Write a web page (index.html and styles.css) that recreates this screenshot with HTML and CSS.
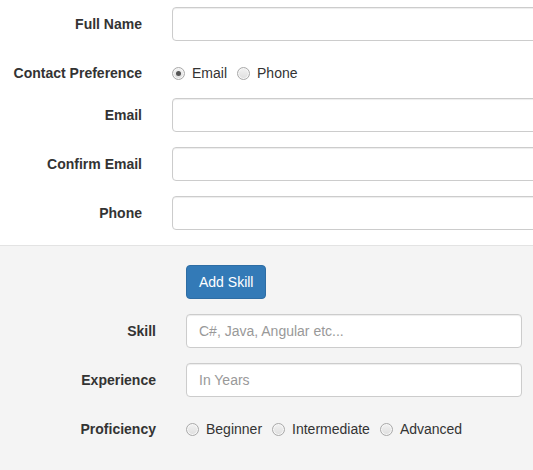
FILE: index.html
```html
<!DOCTYPE html>
<html>
<head>
<meta charset="utf-8">
<link rel="stylesheet" href="styles.css">
</head>
<body>
<form class="form">
  <section class="main">
    <div class="row">
      <label class="lbl">Full Name</label>
      <input class="ctl" type="text">
    </div>
    <div class="row">
      <label class="lbl">Contact Preference</label>
      <div class="radios">
        <label class="radio"><input type="radio" name="cp" checked>Email</label>
        <label class="radio"><input type="radio" name="cp">Phone</label>
      </div>
    </div>
    <div class="row">
      <label class="lbl">Email</label>
      <input class="ctl" type="text">
    </div>
    <div class="row">
      <label class="lbl">Confirm Email</label>
      <input class="ctl" type="text">
    </div>
    <div class="row">
      <label class="lbl">Phone</label>
      <input class="ctl" type="text">
    </div>
  </section>
  <section class="skills">
    <div class="row">
      <span class="lbl"></span>
      <button type="button" class="btn">Add Skill</button>
    </div>
    <div class="row">
      <label class="lbl">Skill</label>
      <input class="ctl" type="text" placeholder="C#, Java, Angular etc...">
    </div>
    <div class="row">
      <label class="lbl">Experience</label>
      <input class="ctl" type="text" placeholder="In Years">
    </div>
    <div class="row">
      <label class="lbl">Proficiency</label>
      <div class="radios">
        <label class="radio"><input type="radio" name="pr">Beginner</label>
        <label class="radio"><input type="radio" name="pr">Intermediate</label>
        <label class="radio"><input type="radio" name="pr">Advanced</label>
      </div>
    </div>
  </section>
</form>
</body>
</html>
```
FILE: styles.css
```css
html, body {
  margin: 0;
  padding: 0;
  background: #fff;
  overflow: hidden;
}
body {
  width: 533px;
  height: 470px;
  font-family: "Liberation Sans", Arial, Helvetica, sans-serif;
  font-size: 14px;
  line-height: 20px;
  color: #333;
}
.form {
  display: flex;
  flex-direction: column;
}
.main {
  padding-top: 7px;
  padding-bottom: 0;
}
.row {
  display: flex;
  align-items: flex-start;
  margin-bottom: 15px;
}
.main .lbl {
  width: 142px;
  margin-right: 30px;
}
.lbl {
  flex: none;
  text-align: right;
  font-weight: bold;
  padding-top: 7px;
  line-height: 20px;
}
.ctl {
  flex: none;
  box-sizing: border-box;
  height: 34px;
  padding: 6px 12px;
  font-family: inherit;
  font-size: 14px;
  line-height: 20px;
  color: #555;
  background: #fff;
  border: 1px solid #ccc;
  border-radius: 4px;
  box-shadow: inset 0 1px 1px rgba(0,0,0,.075);
  margin: 0;
  outline: none;
}
.main .ctl {
  width: 420px;
}
.ctl::placeholder {
  color: #999;
}
.radios {
  display: flex;
  padding-top: 7px;
  line-height: 20px;
}
.radio {
  display: flex;
  align-items: flex-start;
  margin-right: 10px;
}
.radio input {
  appearance: none;
  -webkit-appearance: none;
  box-sizing: border-box;
  width: 13px;
  height: 13px;
  margin: 4px 7px 0 0;
  border-radius: 50%;
  border: 1px solid #a9a9a9;
  background: linear-gradient(#f2f2f2, #dedede);
  box-shadow: inset 0 0 0 1px #f7f7f7;
  position: relative;
}
.radio input:checked::after {
  content: "";
  position: absolute;
  left: 3px;
  top: 3px;
  width: 5px;
  height: 5px;
  border-radius: 50%;
  background: #555;
}
.skills {
  background: #f4f4f4;
  border-top: 1px solid #e3e3e3;
  padding-top: 19px;
  padding-bottom: 30px;
}
.skills .lbl {
  width: 156px;
  margin-right: 30px;
}
.skills .ctl {
  width: 336px;
}
.btn {
  box-sizing: border-box;
  height: 34px;
  padding: 6px 12px;
  font-family: inherit;
  font-size: 14px;
  line-height: 20px;
  color: #fff;
  background: #337ab7;
  border: 1px solid #2e6da4;
  border-radius: 4px;
  margin: 0;
  cursor: pointer;
}
```
